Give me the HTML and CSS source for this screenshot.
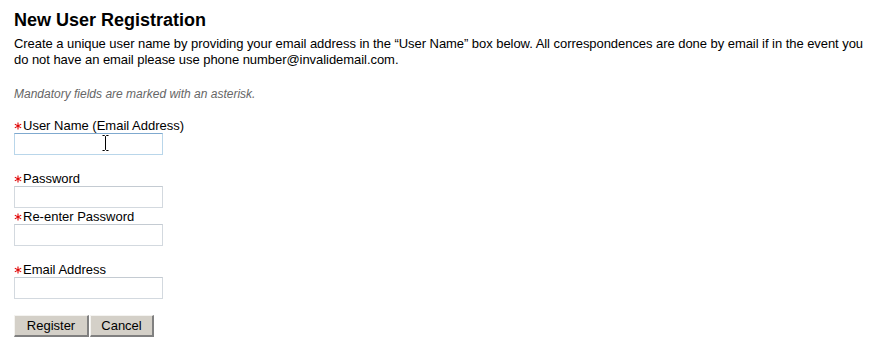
FILE: index.html
```
<!DOCTYPE html>
<html lang="en">
<head>
<meta charset="utf-8">
<title>New User Registration</title>
<link rel="stylesheet" href="styles.css">
</head>
<body>
<main class="page">
  <h1 class="title">New User Registration</h1>
  <p class="intro">Create a unique user name by providing your email address in the “User Name” box below. All correspondences are done by email if in the event you do not have an email please use phone number@invalidemail.com.</p>
  <p class="note">Mandatory fields are marked with an asterisk.</p>
  <form class="form">
    <div class="field">
      <label class="label" for="user"><svg class="req" viewBox="0 0 8 8" aria-hidden="true"><path d="M4 0.4V7.6M0.8 2.1L7.2 5.9M0.8 5.9L7.2 2.1"/></svg>User Name (Email Address)</label>
      <div class="input-wrap">
        <input class="input is-focused" id="user" type="text">
        <svg class="ibeam" viewBox="0 0 7 16" aria-hidden="true"><path d="M0.5 0.5H2.5L3.5 1.5L4.5 0.5H6.5M3.5 1.5V14.5M0.5 15.5H2.5L3.5 14.5L4.5 15.5H6.5"/></svg>
      </div>
    </div>
    <div class="field field-gap">
      <label class="label" for="pw"><svg class="req" viewBox="0 0 8 8" aria-hidden="true"><path d="M4 0.4V7.6M0.8 2.1L7.2 5.9M0.8 5.9L7.2 2.1"/></svg>Password</label>
      <input class="input" id="pw" type="password">
    </div>
    <div class="field field-tight">
      <label class="label" for="pw2"><svg class="req" viewBox="0 0 8 8" aria-hidden="true"><path d="M4 0.4V7.6M0.8 2.1L7.2 5.9M0.8 5.9L7.2 2.1"/></svg>Re-enter Password</label>
      <input class="input" id="pw2" type="password">
    </div>
    <div class="field field-gap">
      <label class="label" for="email"><svg class="req" viewBox="0 0 8 8" aria-hidden="true"><path d="M4 0.4V7.6M0.8 2.1L7.2 5.9M0.8 5.9L7.2 2.1"/></svg>Email Address</label>
      <input class="input" id="email" type="text">
    </div>
    <div class="actions">
      <button class="btn btn-register" type="button">Register</button>
      <button class="btn btn-cancel" type="button">Cancel</button>
    </div>
  </form>
</main>
</body>
</html>
```

FILE: styles.css
```
html, body {
  margin: 0;
  padding: 0;
  background: #ffffff;
}

.page {
  padding: 9px 0 0 14px;
  font-family: "Liberation Sans", Arial, sans-serif;
  font-size: 13px;
  color: #000000;
}

.title {
  margin: 0;
  font-size: 18px;
  font-weight: bold;
  line-height: 22px;
}

.intro {
  margin: 5px 0 0 0;
  line-height: 16px;
  letter-spacing: -0.05px;
}

.note {
  margin: 18px 0 0 0;
  font-size: 12px;
  line-height: 16px;
  font-style: italic;
  color: #666666;
}

.form {
  margin: 16px 0 0 0;
}

.field {
  display: flex;
  flex-direction: column;
  align-items: flex-start;
}

.field-gap {
  margin-top: 16px;
}

.field-tight {
  margin-top: 1px;
}

.label {
  display: flex;
  align-items: center;
  height: 15px;
  line-height: 15px;
}

.req {
  width: 8px;
  height: 8px;
  margin: 1px 1px 0 0;
  fill: none;
  stroke: #e00000;
  stroke-width: 1.1;
}

.input-wrap {
  position: relative;
}

.input {
  display: block;
  box-sizing: border-box;
  width: 149px;
  height: 22px;
  margin: 0;
  padding: 1px 3px;
  border: 1px solid #d3d9df;
  border-top-color: #c4cbd2;
  background: #ffffff;
  font-family: "Liberation Sans", Arial, sans-serif;
  font-size: 13px;
  outline: none;
}

.input.is-focused {
  border-color: #b9d6ea;
  border-top-color: #7fa9cf;
}

.ibeam {
  position: absolute;
  left: 88px;
  top: 2px;
  width: 7px;
  height: 16px;
  fill: none;
  stroke: #000000;
  stroke-width: 1;
}

.actions {
  display: flex;
  gap: 1px;
  margin-top: 16px;
}

.btn {
  box-sizing: border-box;
  height: 22px;
  margin: 0;
  padding: 0;
  border-style: solid;
  border-width: 1px 2px 2px 1px;
  border-color: #f4f3f0 #808080 #808080 #f4f3f0;
  background: #d4d0c8;
  color: #000000;
  font-family: "Liberation Sans", Arial, sans-serif;
  font-size: 13px;
  line-height: 17px;
  text-align: center;
}

.btn-register {
  width: 75px;
}

.btn-cancel {
  width: 64px;
}
```
